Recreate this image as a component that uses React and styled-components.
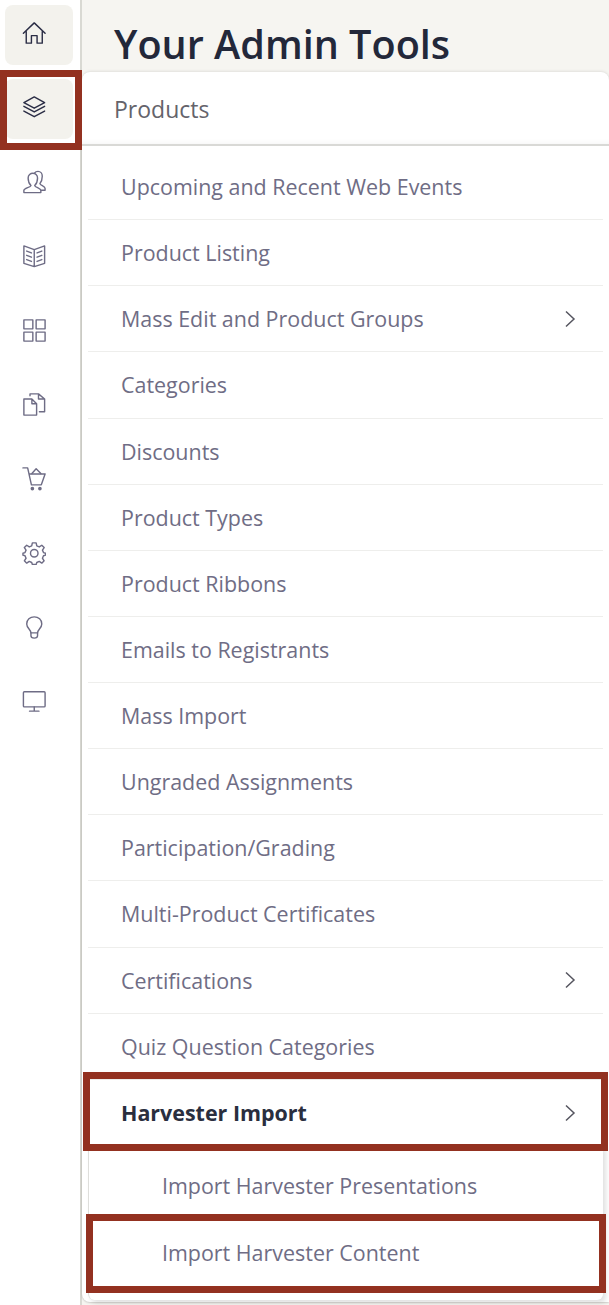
import React from 'react';
import styled, { createGlobalStyle } from 'styled-components';

const GlobalStyle = createGlobalStyle`
  html, body { margin: 0; padding: 0; height: 100%; background: #fff; overflow: hidden; }
  body { font-family: "Open Sans", "Liberation Sans", sans-serif; }
`;

const Page = styled.div`
  display: flex;
  width: 609px;
  height: 1305px;
  overflow: hidden;
`;

const Sidebar = styled.nav`
  flex: 0 0 82px;
  padding: 5px 7px 0 5px;
  box-sizing: border-box;
  display: flex;
  flex-direction: column;
  gap: 14.2px;
  border-right: 2px solid #d9d9d3;
`;

const NavTile = styled.div`
  position: relative;
  height: 60px;
  padding: 0 10px 3px 0;
  box-sizing: border-box;
  display: flex;
  align-items: center;
  justify-content: center;
  border-radius: 8px;
  background: ${(p) => (p.$active ? '#f3f2ed' : 'transparent')};
  color: ${(p) => (p.$active ? '#2a2d45' : '#6e6c85')};
`;

const Callout = styled.div`
  position: absolute;
  top: ${(p) => p.$top}px;
  right: ${(p) => p.$right}px;
  bottom: ${(p) => p.$bottom}px;
  left: ${(p) => p.$left}px;
  border: 7px solid #933120;
  pointer-events: none;
`;

const Main = styled.main`
  flex: 1;
  display: flex;
  flex-direction: column;
  min-width: 0;
  background: #f6f5f1;
`;

const Header = styled.header`
  height: 72px;
  flex: 0 0 72px;
  box-sizing: border-box;
  padding: 19px 0 0 32px;
`;

const Title = styled.h1`
  margin: 0;
  font-size: 39.6px;
  line-height: 50px;
  font-weight: 600;
  color: #23283a;
`;

const Card = styled.section`
  height: 1230px;
  background: #fff;
  border-radius: 8px 8px 0 8px;
  box-shadow: 0 -1px 3px rgba(0, 0, 0, 0.08), 0 1px 2px rgba(0, 0, 0, 0.15);
  display: flex;
  flex-direction: column;
`;

const CardHeader = styled.div`
  height: 74px;
  flex: 0 0 74px;
  box-sizing: border-box;
  padding: 2px 0 0 32px;
  display: flex;
  align-items: center;
  font-size: 23px;
  color: #64636b;
  border-bottom: 2px solid #d9d9d6;
  box-shadow: inset 0 -6px 6px -6px rgba(0, 0, 0, 0.06);
`;

const List = styled.ul`
  list-style: none;
  margin: 0;
  padding: 8px 6px 0 6px;
`;

const Row = styled.li`
  position: relative;
  height: 66.13px;
  box-sizing: border-box;
  padding: 0 27px 0 33px;
  display: flex;
  align-items: center;
  justify-content: space-between;
  font-size: 21.45px;
  font-weight: ${(p) => (p.$bold ? 700 : 400)};
  color: ${(p) => (p.$bold ? '#2a2e3e' : '#6f6d85')};
  border-bottom: ${(p) => (p.$plain ? 'none' : '1px solid #eeeeec')};
`;

const SubList = styled.ul`
  list-style: none;
  margin: 0;
  padding: 7px 0 0;
  height: 154px;
  box-sizing: border-box;
  border-left: 1px solid #dededb;
  border-radius: 0 0 6px 6px;
  box-shadow: 3px 3px 5px rgba(0, 0, 0, 0.12);
`;

const SubRow = styled.li`
  position: relative;
  height: 66.13px;
  box-sizing: border-box;
  padding-left: 73px;
  display: flex;
  align-items: center;
  font-size: 21.45px;
  color: #6f6d85;
`;

const Chevron = () => (
  <svg width="12" height="18" viewBox="0 0 12 18" fill="none" stroke="#55555f" strokeWidth="1.5">
    <path d="M2 1.5 L10 9 L2 16.5" />
  </svg>
);

const Icon = ({ children }) => (
  <svg width="24.5" height="24.5" viewBox="0 0 26 26" fill="none" stroke="currentColor" strokeWidth="1.5" strokeLinejoin="round" strokeLinecap="round">
    {children}
  </svg>
);

const icons = [
  <path key="home" d="M1.5 13 L13 2 L24.5 13 M4.5 11 V23.5 H10 V15.5 H16 V23.5 H21.5 V11" />,
  <g key="layers">
    <path d="M13 2 L24 8 L13 14 L2 8 Z" />
    <path d="M2 12 L13 18 L24 12" />
    <path d="M2 17 L13 23 L24 17" />
  </g>,
  <g key="users">
    <path d="M2 24 V21.5 C2 19 9 18.5 9.5 16.5 C7 14 6.5 11 6.5 8.5 C6.5 5.5 9 3.5 11.5 3.5 C14 3.5 16.5 5.5 16.5 8.5 C16.5 11 16 14 13.5 16.5 C14 18.5 20 19 20 21.5 V24 Z" />
    <path d="M13.5 3 C14.5 1.5 16 1.5 17 1.5 C19.5 1.5 21.5 3.5 21.5 6.5 C21.5 9 21 12 19 14.5 C19.5 16.5 24.5 17 24.5 19.5 V21.5 H20.5" />
  </g>,
  <g key="book">
    <path d="M13 6 L2 2 V20.5 L13 24 L24 20.5 V2 L13 6 V24" />
    <path d="M5 7.5 L10 9.5 M5 12 L10 14 M5 16.5 L10 18.5 M21 7.5 L16 9.5 M21 12 L16 14 M21 16.5 L16 18.5" />
  </g>,
  <g key="grid">
    <rect x="2" y="2" width="9.5" height="9.5" />
    <rect x="15" y="2" width="9.5" height="9.5" />
    <rect x="2" y="15" width="9.5" height="9.5" />
    <rect x="15" y="15" width="9.5" height="9.5" />
  </g>,
  <g key="docs">
    <path d="M2 7.5 H10.5 L15.5 12.5 V24.5 H2 Z M10.5 7.5 V12.5 H15.5" />
    <path d="M8.5 4 V2 H17.5 L24 7.5 V21 H18.5 M17.5 2 V7.5 H24" />
  </g>,
  <g key="cart">
    <path d="M1 2 H6 L10 20 H20.5 L24.5 8.5 H7.5" />
    <path d="M10.5 8 L15 3 L20 8" />
    <circle cx="11" cy="24" r="1.2" fill="currentColor" />
    <circle cx="19" cy="24" r="1.2" fill="currentColor" />
  </g>,
  <g key="gear">
    <circle cx="13" cy="13" r="4" />
    <path d="M11 2 H15 L15.7 5.2 L18.3 6.3 L21 4.5 L23.5 7 L21.7 9.7 L22.8 12.3 L25 13 V15 L22.8 15.7 L21.7 18.3 L23.5 21 L21 23.5 L18.3 21.7 L15.7 22.8 L15 25 H11 L10.3 22.8 L7.7 21.7 L5 23.5 L2.5 21 L4.3 18.3 L3.2 15.7 L1 15 V13 L3.2 12.3 L4.3 9.7 L2.5 7 L5 4.5 L7.7 6.3 L10.3 5.2 Z" />
  </g>,
  <g key="bulb">
    <path d="M9.5 19 C9.5 15.5 5 14 5 9.5 C5 5 8.5 2 13 2 C17.5 2 21 5 21 9.5 C21 14 16.5 15.5 16.5 19 Z" />
    <path d="M9.5 19 V22 C9.5 23.5 11 24.5 13 24.5 C15 24.5 16.5 23.5 16.5 22 V19" />
  </g>,
  <g key="monitor">
    <rect x="1.5" y="3" width="23" height="16" rx="1" />
    <path d="M13 19 V23.5 M8 23.5 H18" />
  </g>,
];

const items = [
  { label: 'Upcoming and Recent Web Events' },
  { label: 'Product Listing' },
  { label: 'Mass Edit and Product Groups', more: true },
  { label: 'Categories' },
  { label: 'Discounts' },
  { label: 'Product Types' },
  { label: 'Product Ribbons' },
  { label: 'Emails to Registrants' },
  { label: 'Mass Import' },
  { label: 'Ungraded Assignments' },
  { label: 'Participation/Grading' },
  { label: 'Multi-Product Certificates' },
  { label: 'Certifications', more: true },
  { label: 'Quiz Question Categories' },
];

const App = () => {
  return (
    <Page>
      <GlobalStyle />
      <Sidebar>
        {icons.map((icon, i) => (
          <NavTile key={i} $active={i < 2}>
            <Icon>{icon}</Icon>
            {i === 1 && <Callout $top={-9} $right={-9} $bottom={-11} $left={-5} />}
          </NavTile>
        ))}
      </Sidebar>
      <Main>
        <Header>
          <Title>Your Admin Tools</Title>
        </Header>
        <Card>
          <CardHeader>Products</CardHeader>
          <List>
            {items.map((item) => (
              <Row key={item.label}>
                {item.label}
                {item.more && <Chevron />}
              </Row>
            ))}
            <Row $bold $plain>
              Harvester Import
              <Chevron />
              <Callout $top={-8} $right={-5} $bottom={-5} $left={-5} />
            </Row>
            <SubList>
              <SubRow>Import Harvester Presentations</SubRow>
              <SubRow>
                Import Harvester Content
                <Callout $top={-5} $right={-3} $bottom={-8} $left={-3} />
              </SubRow>
            </SubList>
          </List>
        </Card>
      </Main>
    </Page>
  );
};

export default App;
